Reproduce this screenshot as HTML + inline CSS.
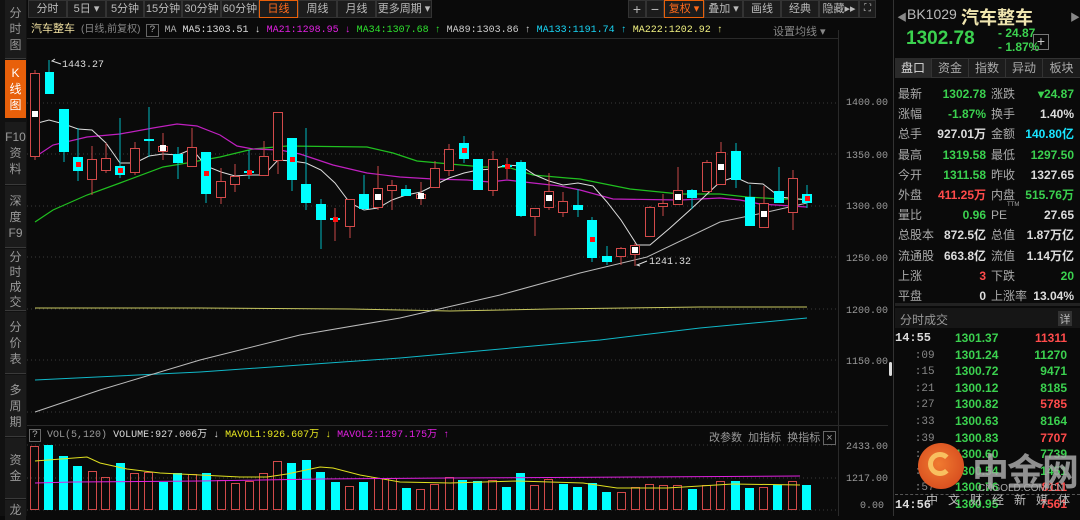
<!DOCTYPE html><html><head><meta charset="utf-8"><style>
*{margin:0;padding:0;box-sizing:border-box}
body{width:1080px;height:516px;background:#0a0a0a;overflow:hidden;position:relative;font-family:"Liberation Sans","Noto Sans CJK SC",sans-serif;color:#bbb}
.a{position:absolute;white-space:nowrap}
.side{position:absolute;left:5px;width:21px;background:#1b1b1b;border-bottom:1px solid #3a3a3a;color:#999;font-size:12px;line-height:16px;text-align:center;display:flex;flex-direction:column;justify-content:center}
.tab{position:absolute;top:0;height:18px;background:#1c1c1c;border:1px solid #333;color:#bbb;font-size:11px;line-height:16px;text-align:center}
.mono{font-family:"Liberation Mono","Noto Sans CJK SC",monospace}
.g{color:#3bd14f}.r{color:#ff4b4b}.w{color:#ddd}.c{color:#19e5ff}
.pt{position:absolute;top:58px;width:37px;height:20px;font-size:12px;line-height:20px;text-align:center;color:#aaa;border-right:1px solid #333}
</style></head><body>
<div style="position:absolute;left:0;top:0;width:27px;height:516px;background:#111"></div>
<div class="side" style="top:0;height:59px">分<br>时<br>图</div>
<div class="side" style="top:60px;height:58px;background:#e8600a;color:#fff;border:none">K<br>线<br>图</div>
<div class="side" style="top:122px;height:63px">F10<br>资<br>料</div>
<div class="side" style="top:186px;height:62px">深<br>度<br>F9</div>
<div class="side" style="top:249px;height:62px;line-height:15px">分<br>时<br>成<br>交</div>
<div class="side" style="top:312px;height:62px">分<br>价<br>表</div>
<div class="side" style="top:375px;height:62px">多<br>周<br>期</div>
<div class="side" style="top:438px;height:61px">资<br>金</div>
<div class="side" style="top:500px;height:20px;border:none">龙</div>
<div class="tab" style="left:28px;width:39px">分时</div>
<div class="tab" style="left:67px;width:39px">5日 ▾</div>
<div class="tab" style="left:106px;width:38px">5分钟</div>
<div class="tab" style="left:144px;width:38px">15分钟</div>
<div class="tab" style="left:182px;width:39px">30分钟</div>
<div class="tab" style="left:221px;width:38px">60分钟</div>
<div class="tab" style="left:259px;width:39px;border-color:#e8600a;color:#ff6a1a">日线</div>
<div class="tab" style="left:298px;width:39px">周线</div>
<div class="tab" style="left:337px;width:39px">月线</div>
<div class="tab" style="left:376px;width:56px">更多周期 ▾</div>
<div class="tab" style="left:628px;width:18px;font-size:14px">+</div>
<div class="tab" style="left:646px;width:18px;font-size:14px">−</div>
<div class="tab" style="left:664px;width:40px;border-color:#e8600a;color:#ff6a1a">复权 ▾</div>
<div class="tab" style="left:704px;width:39px">叠加 ▾</div>
<div class="tab" style="left:743px;width:38px">画线</div>
<div class="tab" style="left:781px;width:38px">经典</div>
<div class="tab" style="left:819px;width:40px">隐藏▸▸</div>
<div class="tab" style="left:859px;width:17px;font-size:10px">⛶</div>
<div class="a mono" style="left:31px;top:23px;font-size:10px;line-height:12px"><span style="color:#f0e0a0;font-family:'Liberation Sans','Noto Sans CJK SC',sans-serif;font-size:11px">汽车整车</span> <span style="color:#888;font-family:'Liberation Sans','Noto Sans CJK SC',sans-serif;font-size:10px">(日线,前复权)</span> <span style="border:1px solid #666;color:#aaa;padding:0 2px">?</span> <span style="color:#aaa">MA</span> <span style="color:#ddd">MA5:1303.51 ↓</span> <span style="color:#e020e0">MA21:1298.95 ↓</span> <span style="color:#2ee02e">MA34:1307.68 ↑</span> <span style="color:#ccc">MA89:1303.86 ↑</span> <span style="color:#19d5f5">MA133:1191.74 ↑</span> <span style="color:#f0f080">MA222:1202.92 ↑</span></div>
<div class="a" style="left:773px;top:23px;font-size:11px;color:#888">设置均线 ▾</div>
<svg class="a" style="left:0;top:0" width="895" height="516">
<line x1="27" y1="38.5" x2="838" y2="38.5" stroke="#2a2a2a"/>
<line x1="838.5" y1="30" x2="838.5" y2="516" stroke="#2a2a2a"/>
<line x1="893.5" y1="0" x2="893.5" y2="516" stroke="#333"/>
<line x1="27" y1="425.5" x2="888" y2="425.5" stroke="#2a2a2a"/>
<g stroke="#3a3a3a" stroke-dasharray="1,3">
<line x1="27" y1="103" x2="838" y2="103"/><line x1="27" y1="154" x2="838" y2="154"/><line x1="27" y1="206" x2="838" y2="206"/><line x1="27" y1="257" x2="838" y2="257"/><line x1="27" y1="309" x2="838" y2="309"/><line x1="27" y1="360" x2="838" y2="360"/><line x1="27" y1="412" x2="838" y2="412"/>
<line x1="27" y1="445" x2="838" y2="445"/><line x1="27" y1="478" x2="838" y2="478"/><line x1="27" y1="510" x2="838" y2="510"/>
</g>
<g font-family="Liberation Mono,monospace" font-size="10" fill="#999">
<text x="846" y="105">1400.00</text><text x="846" y="158">1350.00</text><text x="846" y="209">1300.00</text><text x="846" y="261">1250.00</text><text x="846" y="313">1200.00</text><text x="846" y="364">1150.00</text>
<text x="846" y="449">2433.00</text><text x="846" y="481">1217.00</text><text x="860" y="508">0.00</text>
</g>
<polyline fill="none" stroke="#c8c860" points="35,308 200,308 350,309 450,311 550,309 700,307 807,307"/>
<polyline fill="none" stroke="#10b8c8" points="35,380 200,372 400,358 600,340 700,328 807,318"/>
<polyline fill="none" stroke="#bbb" points="35,412 100,390 200,360 300,335 400,318 500,295 580,273 647,257 720,222 763,213 807,203"/>
<polyline fill="none" stroke="#20c020" stroke-width="1.2" points="35,222 53,210 87,195 120,183 163,167 187,163 220,157 253,149 287,146 367,147 393,153 417,161 450,164 483,167 507,167 533,175 567,178 580,179 630,189 680,194 720,194 747,197 780,199 807,199"/>
<polyline fill="none" stroke="#c020c0" stroke-width="1.2" points="35,157 53,145 87,137 120,134 153,128 177,124 197,126 220,135 237,146 253,149 280,150 300,154 333,165 367,173 400,177 433,179 467,180 490,182 507,180 533,183 560,186 580,190 613,199 680,200 720,198 740,200 760,204 807,207"/>
<polyline fill="none" stroke="#ddd" points="34,124 49,120 64,124 78,129 92,130 106,143 120,163 135,163 149,156 163,154 178,155 192,149 206,166 221,172 235,176 249,175 264,175 278,160 292,161 306,163 321,170 335,183 350,203 364,210 378,208 392,200 406,195 421,192 435,185 449,178 464,173 478,170 493,169 507,165 521,166 535,175 549,181 563,185 578,183 593,186 607,202 621,220 637,245 650,245 670,228 690,210 720,182 735,177 748,183 763,184 780,197 807,200"/>
<g stroke-width="1">
<g stroke="#c84848">
<line x1="35" y1="70" x2="35" y2="160"/><line x1="92" y1="146" x2="92" y2="195"/><line x1="106" y1="143" x2="106" y2="173"/><line x1="135" y1="142" x2="135" y2="175"/><line x1="163" y1="133" x2="163" y2="160"/><line x1="192" y1="128" x2="192" y2="167"/><line x1="221" y1="168" x2="221" y2="204"/><line x1="235" y1="164" x2="235" y2="192"/><line x1="264" y1="141" x2="264" y2="176"/><line x1="278" y1="112" x2="278" y2="174"/><line x1="335" y1="208" x2="335" y2="241"/><line x1="350" y1="199" x2="350" y2="238"/><line x1="378" y1="166" x2="378" y2="210"/><line x1="392" y1="180" x2="392" y2="210"/><line x1="421" y1="182" x2="421" y2="205"/><line x1="435" y1="161" x2="435" y2="187"/><line x1="449" y1="144" x2="449" y2="176"/><line x1="493" y1="151" x2="493" y2="196"/><line x1="507" y1="158" x2="507" y2="179"/><line x1="535" y1="208" x2="535" y2="236"/><line x1="549" y1="173" x2="549" y2="210"/><line x1="563" y1="192" x2="563" y2="217"/><line x1="621" y1="247" x2="621" y2="265"/><line x1="635" y1="243" x2="635" y2="266"/><line x1="650" y1="206" x2="650" y2="236"/><line x1="663" y1="194" x2="663" y2="216"/><line x1="678" y1="167" x2="678" y2="204"/><line x1="707" y1="160" x2="707" y2="191"/><line x1="721" y1="142" x2="721" y2="185"/><line x1="764" y1="186" x2="764" y2="227"/><line x1="793" y1="170" x2="793" y2="230"/>
</g>
<g stroke="#00b8c0">
<line x1="49" y1="60" x2="49" y2="94"/><line x1="64" y1="109" x2="64" y2="162"/><line x1="78" y1="128" x2="78" y2="181"/><line x1="120" y1="118" x2="120" y2="178"/><line x1="149" y1="107" x2="149" y2="157"/><line x1="178" y1="147" x2="178" y2="179"/><line x1="206" y1="152" x2="206" y2="203"/><line x1="249" y1="150" x2="249" y2="179"/><line x1="292" y1="138" x2="292" y2="191"/><line x1="306" y1="128" x2="306" y2="210"/><line x1="321" y1="199" x2="321" y2="249"/><line x1="364" y1="175" x2="364" y2="210"/><line x1="406" y1="185" x2="406" y2="196"/><line x1="464" y1="136" x2="464" y2="163"/><line x1="478" y1="159" x2="478" y2="190"/><line x1="521" y1="160" x2="521" y2="217"/><line x1="578" y1="189" x2="578" y2="217"/><line x1="592" y1="217" x2="592" y2="262"/><line x1="607" y1="246" x2="607" y2="265"/><line x1="692" y1="189" x2="692" y2="209"/><line x1="736" y1="143" x2="736" y2="188"/><line x1="750" y1="185" x2="750" y2="226"/><line x1="779" y1="167" x2="779" y2="203"/><line x1="807" y1="185" x2="807" y2="208"/>
</g>
<g stroke="#d24a4a" fill="#0a0a0a">
<rect x="30.5" y="73.5" width="9" height="83"/><rect x="87.5" y="159.5" width="9" height="20"/><rect x="101.5" y="158.5" width="9" height="12"/><rect x="130.5" y="148.5" width="9" height="24"/><rect x="158.5" y="146.5" width="9" height="5"/><rect x="187.5" y="147.5" width="9" height="19"/><rect x="216.5" y="181.5" width="9" height="16"/><rect x="230.5" y="176.5" width="9" height="8"/><rect x="259.5" y="156.5" width="9" height="19"/><rect x="273.5" y="112.5" width="9" height="48"/><rect x="345.5" y="199.5" width="9" height="27"/><rect x="373.5" y="188.5" width="9" height="19"/><rect x="387.5" y="185.5" width="9" height="5"/><rect x="416.5" y="194.5" width="9" height="4"/><rect x="430.5" y="168.5" width="9" height="19"/><rect x="444.5" y="149.5" width="9" height="21"/><rect x="488.5" y="159.5" width="9" height="31"/><rect x="530.5" y="208.5" width="9" height="8"/><rect x="544.5" y="191.5" width="9" height="16"/><rect x="558.5" y="201.5" width="9" height="11"/><rect x="616.5" y="248.5" width="9" height="8"/><rect x="630.5" y="245.5" width="9" height="9"/><rect x="645.5" y="207.5" width="9" height="29"/><rect x="658.5" y="203.5" width="9" height="3"/><rect x="673.5" y="190.5" width="9" height="14"/><rect x="702.5" y="162.5" width="9" height="29"/><rect x="716.5" y="152.5" width="9" height="32"/><rect x="759.5" y="203.5" width="9" height="24"/><rect x="788.5" y="178.5" width="9" height="34"/>
</g>
<g fill="#00ffff">
<rect x="45" y="72" width="9" height="22"/><rect x="59" y="109" width="10" height="43"/><rect x="73" y="157" width="10" height="14"/><rect x="115" y="166" width="10" height="9"/><rect x="144" y="139" width="10" height="2"/><rect x="173" y="154" width="10" height="9"/><rect x="201" y="152" width="10" height="42"/><rect x="244" y="171" width="10" height="2"/><rect x="287" y="138" width="10" height="42"/><rect x="301" y="184" width="10" height="19"/><rect x="316" y="204" width="10" height="16"/><rect x="330" y="218" width="10" height="2"/><rect x="359" y="194" width="10" height="15"/><rect x="401" y="189" width="10" height="7"/><rect x="459" y="143" width="10" height="16"/><rect x="473" y="159" width="10" height="31"/><rect x="502" y="165" width="10" height="2"/><rect x="516" y="162" width="10" height="54"/><rect x="573" y="205" width="10" height="5"/><rect x="587" y="220" width="10" height="38"/><rect x="602" y="256" width="10" height="6"/><rect x="687" y="190" width="10" height="8"/><rect x="731" y="151" width="10" height="29"/><rect x="745" y="197" width="10" height="29"/><rect x="774" y="191" width="10" height="12"/><rect x="802" y="194" width="10" height="9"/>
</g>
<g fill="#ff1010"><rect x="76" y="162" width="5" height="5"/><rect x="118" y="168" width="5" height="5"/><rect x="204" y="171" width="5" height="5"/><rect x="247" y="170" width="5" height="5"/><rect x="290" y="157" width="5" height="5"/><rect x="333" y="217" width="5" height="5"/><rect x="462" y="148" width="5" height="5"/><rect x="505" y="164" width="5" height="5"/><rect x="590" y="237" width="5" height="5"/><rect x="805" y="196" width="5" height="5"/></g>
<g fill="#fff"><rect x="32" y="111" width="6" height="6"/><rect x="160" y="145" width="6" height="6"/><rect x="375" y="194" width="6" height="6"/><rect x="418" y="193" width="6" height="6"/><rect x="546" y="195" width="6" height="6"/><rect x="632" y="247" width="6" height="6"/><rect x="675" y="194" width="6" height="6"/><rect x="718" y="164" width="6" height="6"/><rect x="761" y="211" width="6" height="6"/></g>
</g>
<g font-family="Liberation Mono,monospace" font-size="10" fill="#ddd"><text x="62" y="67">1443.27</text><text x="649" y="264">1241.32</text></g>
<polyline fill="none" stroke="#ddd" points="61,64 52,61 55,59"/><polyline fill="none" stroke="#ddd" points="647,261 637,265 640,266"/>
<g fill="#00ffff">
<rect x="44" y="445" width="9" height="65"/><rect x="59" y="456" width="9" height="54"/><rect x="73" y="466" width="9" height="44"/><rect x="116" y="463" width="9" height="47"/><rect x="159" y="482" width="9" height="28"/><rect x="173" y="473" width="9" height="37"/><rect x="202" y="473" width="9" height="37"/><rect x="287" y="463" width="9" height="47"/><rect x="302" y="460" width="9" height="50"/><rect x="316" y="472" width="9" height="38"/><rect x="331" y="482" width="9" height="28"/><rect x="359" y="482" width="9" height="28"/><rect x="402" y="488" width="9" height="22"/><rect x="458" y="480" width="9" height="30"/><rect x="473" y="481" width="9" height="29"/><rect x="502" y="487" width="9" height="23"/><rect x="516" y="473" width="9" height="37"/><rect x="559" y="484" width="9" height="26"/><rect x="573" y="487" width="9" height="23"/><rect x="588" y="483" width="9" height="27"/><rect x="602" y="492" width="9" height="18"/><rect x="688" y="489" width="9" height="21"/><rect x="731" y="481" width="9" height="29"/><rect x="745" y="488" width="9" height="22"/><rect x="773" y="485" width="9" height="25"/><rect x="802" y="485" width="9" height="25"/>
</g>
<g stroke="#d24a4a" fill="none">
<rect x="30.5" y="446.5" width="8" height="63"/><rect x="88.5" y="471.5" width="8" height="38"/><rect x="101.5" y="477.5" width="8" height="32"/><rect x="130.5" y="473.5" width="8" height="36"/><rect x="144.5" y="472.5" width="8" height="37"/><rect x="188.5" y="474.5" width="8" height="35"/><rect x="217.5" y="480.5" width="8" height="29"/><rect x="231.5" y="483.5" width="8" height="26"/><rect x="245.5" y="481.5" width="8" height="28"/><rect x="259.5" y="473.5" width="8" height="36"/><rect x="273.5" y="461.5" width="8" height="48"/><rect x="345.5" y="486.5" width="8" height="23"/><rect x="374.5" y="478.5" width="8" height="31"/><rect x="388.5" y="478.5" width="8" height="31"/><rect x="416.5" y="489.5" width="8" height="20"/><rect x="430.5" y="484.5" width="8" height="25"/><rect x="445.5" y="477.5" width="8" height="32"/><rect x="488.5" y="480.5" width="8" height="29"/><rect x="530.5" y="485.5" width="8" height="24"/><rect x="544.5" y="479.5" width="8" height="30"/><rect x="617.5" y="492.5" width="8" height="17"/><rect x="631.5" y="487.5" width="8" height="22"/><rect x="645.5" y="484.5" width="8" height="25"/><rect x="659.5" y="485.5" width="8" height="24"/><rect x="673.5" y="485.5" width="8" height="24"/><rect x="702.5" y="485.5" width="8" height="24"/><rect x="716.5" y="481.5" width="8" height="28"/><rect x="759.5" y="487.5" width="8" height="22"/><rect x="788.5" y="481.5" width="8" height="28"/>
</g>
<polyline fill="none" stroke="#e0e020" points="35,461 87,457 100,463 127,469 160,473 240,477 267,477 287,474 320,467 333,468 360,475 400,482 450,483 517,481 583,483 617,488 667,488 700,486 733,484 800,485"/>
<polyline fill="none" stroke="#e020e0" points="35,483 73,482 200,481 320,479 450,478 643,477 800,476"/>
</svg>
<div class="a mono" style="left:29px;top:430px;font-size:10px;line-height:12px"><span style="border:1px solid #666;color:#aaa;padding:0 2px">?</span> <span style="color:#999">VOL(5,120)</span> <span style="color:#ddd">VOLUME:927.006万 ↓</span> <span style="color:#e8e820">MAVOL1:926.607万 ↓</span> <span style="color:#e020e0">MAVOL2:1297.175万 ↑</span></div>
<div class="a" style="left:709px;top:429px;font-size:11px;color:#999">改参数 &nbsp;加指标 &nbsp;换指标 <span style="border:1px solid #666;padding:0 2px">×</span></div>
<div class="a" style="left:889px;top:362px;width:3px;height:14px;background:#ddd;border-radius:2px"></div>
<div class="a" style="left:897px;top:9px;font-size:10px;color:#888">◀</div>
<div class="a" style="left:1070px;top:9px;font-size:10px;color:#888">▶</div>
<div class="a" style="left:907px;top:6px;font-size:14px;color:#bbb">BK1029</div>
<div class="a" style="left:961px;top:4px;font-size:18px;font-weight:bold;color:#f0e6b0">汽车整车</div>
<div class="a" style="left:906px;top:28px;font-size:19px;font-weight:bold;color:#3bd14f">1302.78</div>
<div class="a" style="left:998px;top:26px;font-size:12px;font-weight:bold;color:#3bd14f;line-height:14px">- 24.87<br>- 1.87%</div>
<div class="a" style="left:1033px;top:34px;width:16px;height:16px;border:1px solid #777;color:#ccc;font-size:14px;line-height:13px;text-align:center">+</div>
<div class="a" style="left:895px;top:58px;width:185px;height:20px;background:#1c1c1c;border-top:1px solid #333;border-bottom:1px solid #333"></div>
<div class="pt" style="left:895px;background:#2a2a2a;color:#ddd">盘口</div>
<div class="pt" style="left:932px">资金</div>
<div class="pt" style="left:969px">指数</div>
<div class="pt" style="left:1006px">异动</div>
<div class="pt" style="left:1043px;border:none">板块</div>
<div class="a" style="left:898px;top:84px;font-size:12px;color:#aaa;line-height:20.2px">最新<br>涨幅<br>总手<br>最高<br>今开<br>外盘<br>量比<br>总股本<br>流通股<br>上涨<br>平盘</div>
<div class="a" style="left:898px;top:84px;width:88px;font-size:12px;font-weight:bold;line-height:20.2px;text-align:right"><span class="g">1302.78</span><br><span class="g">-1.87%</span><br><span class="w">927.01万</span><br><span class="g">1319.58</span><br><span class="g">1311.58</span><br><span class="r">411.25万</span><br><span class="g">0.96</span><br><span class="w">872.5亿</span><br><span class="w">663.8亿</span><br><span class="r">3</span><br><span class="w">0</span></div>
<div class="a" style="left:991px;top:84px;font-size:12px;color:#aaa;line-height:20.2px">涨跌<br>换手<br>金额<br>最低<br>昨收<br>内盘<br>PE<span style="font-size:6px;vertical-align:top;line-height:0">TTM</span><br>总值<br>流值<br>下跌<br>上涨率</div>
<div class="a" style="left:1000px;top:84px;width:74px;font-size:12px;font-weight:bold;line-height:20.2px;text-align:right"><span class="g">▾24.87</span><br><span class="w">1.40%</span><br><span class="c">140.80亿</span><br><span class="g">1297.50</span><br><span class="w">1327.65</span><br><span class="g">515.76万</span><br><span class="w">27.65</span><br><span class="w">1.87万亿</span><br><span class="w">1.14万亿</span><br><span class="g">20</span><br><span class="w">13.04%</span></div>
<div class="a" style="left:895px;top:303px;width:185px;height:3px;background:#222"></div>
<div class="a" style="left:895px;top:308px;width:185px;height:20px;background:#161616"></div>
<div class="a" style="left:900px;top:311px;font-size:12px;color:#999">分时成交</div>
<div class="a" style="left:1058px;top:311px;width:14px;height:15px;background:#333;color:#bbb;font-size:11px;text-align:center">详</div>
<div class="a mono" style="left:895px;top:330px;font-size:11px;line-height:16.6px;color:#888"><b style="color:#ddd;font-size:12px">14:55</b><br>&nbsp;&nbsp;&nbsp;:09<br>&nbsp;&nbsp;&nbsp;:15<br>&nbsp;&nbsp;&nbsp;:21<br>&nbsp;&nbsp;&nbsp;:27<br>&nbsp;&nbsp;&nbsp;:33<br>&nbsp;&nbsp;&nbsp;:39<br>&nbsp;&nbsp;&nbsp;:45<br>&nbsp;&nbsp;&nbsp;:51<br>&nbsp;&nbsp;&nbsp;:57<br><b style="color:#ddd;font-size:12px">14:56</b></div>
<div class="a" style="left:955px;top:330px;font-size:12px;font-weight:bold;line-height:16.6px;color:#3bd14f">1301.37<br>1301.24<br>1300.72<br>1300.12<br>1300.82<br>1300.63<br>1300.83<br>1300.60<br>1300.54<br>1300.76<br>1300.95</div>
<div class="a" style="left:1020px;top:330px;width:47px;font-size:12px;font-weight:bold;line-height:16.6px;text-align:right"><span class="r">11311</span><br><span class="g">11270</span><br><span class="g">9471</span><br><span class="g">8185</span><br><span class="r">5785</span><br><span class="g">8164</span><br><span class="r">7707</span><br><span class="g">7739</span><br><span class="g">1451</span><br><span class="r">8111</span><br><span class="r">7561</span></div>
<div class="a" style="left:918px;top:443px;width:46px;height:46px;border-radius:50%;background:radial-gradient(circle at 45% 45%,#f07a30,#d0401a)"></div>
<div class="a" style="left:928px;top:452px;width:24px;height:24px;border-radius:50%;border:5px solid #f8c060;border-right-color:transparent"></div>
<div class="a" style="left:972px;top:442px;font-size:37px;font-weight:bold;color:#a8a8a8;opacity:.85;letter-spacing:-2px">中金网</div>
<div class="a" style="left:978px;top:483px;font-size:10px;color:#aaa">CNGOLD.COM.CN</div>
<div class="a" style="left:895px;top:494px;width:185px;border-top:1px dashed #555"></div>
<div class="a" style="left:926px;top:491px;font-size:12px;color:#bbb;letter-spacing:10px">中文财经新媒体</div>
</body></html>
